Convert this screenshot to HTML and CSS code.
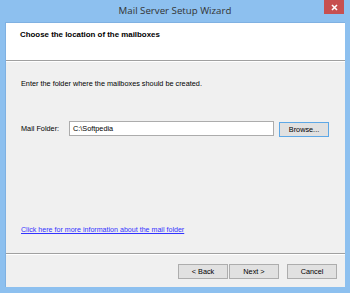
FILE: index.html
```html
<!DOCTYPE html>
<html>
<head>
<meta charset="utf-8">
<link rel="stylesheet" href="styles.css">
</head>
<body>
<div class="window">
  <div class="titlebar">
    <span class="title">Mail Server Setup Wizard</span>
    <div class="close"><svg width="7" height="7" viewBox="0 0 7 7"><path d="M1 1L6 6M6 1L1 6" stroke="#fff" stroke-width="1.6"/></svg></div>
  </div>
  <div class="client">
    <div class="header">Choose the location of the mailboxes</div>
    <div class="body">
      <p class="intro">Enter the folder where the mailboxes should be created.</p>
      <div class="row">
        <span class="label">Mail Folder:</span>
        <div class="input">C:\Softpedia</div>
        <div class="btn default">Browse...</div>
      </div>
      <a class="link">Click here for more information about the mail folder</a>
    </div>
    <div class="footer">
      <div class="btn">&lt; Back</div>
      <div class="btn next">Next &gt;</div>
      <div class="btn cancel">Cancel</div>
    </div>
  </div>
</div>
</body>
</html>
```
FILE: styles.css
```css
* { box-sizing: border-box; }
html, body { margin: 0; padding: 0; }
body { width: 350px; height: 293px; overflow: hidden; font-family: "Liberation Sans", Arial, sans-serif; font-size: 7.3px; color: #000; }
.window { width: 350px; height: 293px; background: #8dc0ef; display: flex; flex-direction: column; }
.titlebar { height: 22px; position: relative; display: flex; align-items: center; justify-content: center; }
.title { font-family: "Open Sans", "Liberation Sans", sans-serif; font-size: 9.7px; color: #333; padding-bottom: 1px; }
.close { position: absolute; top: 0; right: 6px; width: 20px; height: 14px; background: #c75050; display: flex; align-items: center; justify-content: center; }
.client { margin: 0 5px 6px 5px; flex: 1; background: #f0f0f0; border-left: 1px solid #7fb1e2; border-top: 1px solid #7fb1e2; display: flex; flex-direction: column; }
.header { height: 38px; background: #fff; border-bottom: 1px solid #a0a0a0; padding: 6px 0 0 14px; font-weight: bold; line-height: 11px; font-size: 7.9px; }
.body { height: 193px; border-top: 1px solid #fff; border-bottom: 1px solid #a0a0a0; display: flex; flex-direction: column; padding: 0 0 17px 15px; }
.intro { margin: 16px 0 0 0; line-height: 11px; }
.row { display: flex; align-items: center; margin-top: 32px; height: 15px; }
.label { width: 48px; }
.input { width: 205px; height: 15px; background: #fff; border: 1px solid #acacac; padding-left: 3px; line-height: 13px; }
.btn { width: 50px; height: 15px; background: #e1e1e1; border: 1px solid #adadad; display: flex; align-items: center; justify-content: center; }
.row .btn { margin-left: 5px; margin-top: 1px; }
.btn.default { border-color: #5ea8e6; }
.link { margin-top: auto; line-height: 11px; font-size: 7.1px; color: #3333ff; text-decoration: underline; }
.footer { flex: 1; border-top: 1px solid #fff; display: flex; justify-content: flex-end; padding: 9px 8px 0 0; }
.next { margin-left: 1px; }
.cancel { margin-left: 8px; }
```
